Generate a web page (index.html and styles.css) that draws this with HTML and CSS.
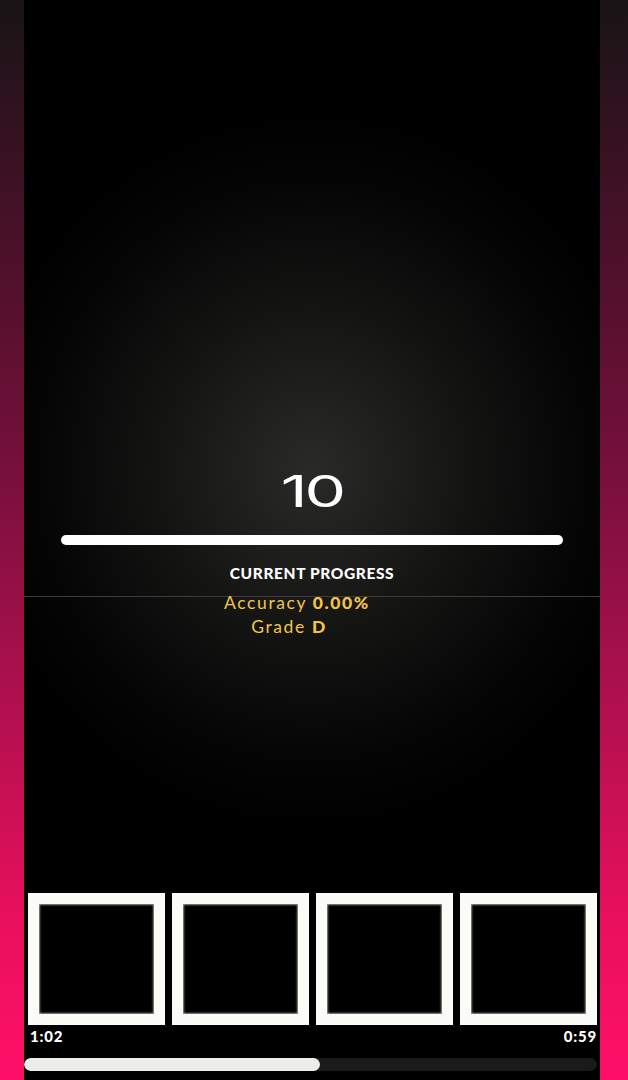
FILE: index.html
```html
<!DOCTYPE html>
<html>
<head>
<meta charset="utf-8">
<link rel="stylesheet" href="styles.css">
</head>
<body>
<div class="page">
  <div class="side side-left"></div>
  <div class="main">
    <div class="stage">
      <div class="count">10</div>
      <div class="bar"></div>
      <div class="label">CURRENT PROGRESS</div>
      <div class="divider"></div>
      <div class="stats">
        <div class="stat">Accuracy <b>0.00%</b></div>
        <div class="stat stat-grade">Grade <b>D</b></div>
      </div>
    </div>
    <div class="bottom">
      <div class="boxes">
        <div class="box"></div>
        <div class="box"></div>
        <div class="box"></div>
        <div class="box"></div>
      </div>
      <div class="times">
        <span>1:02</span>
        <span>0:59</span>
      </div>
      <div class="track"><div class="fill" style="width:51.6%"></div></div>
    </div>
  </div>
  <div class="side side-right"></div>
</div>
</body>
</html>
```
FILE: styles.css
```css
html, body {
  margin: 0;
  padding: 0;
  background: #000;
}
.page {
  display: flex;
  width: 628px;
  height: 1080px;
  overflow: hidden;
  font-family: Lato, "Open Sans", sans-serif;
}
.side {
  background: linear-gradient(to bottom, #181416 0%, #3a1222 15%, #6e1038 40%, #b0104e 65%, #e8105c 85%, #ff1068 100%);
}
.side-left { width: 24px; }
.side-right { width: 28px; }
.main {
  flex: 1;
  display: flex;
  flex-direction: column;
  background: radial-gradient(ellipse 340px 360px at 50% 470px, #2a2a28 0%, #141413 45%, #050505 80%, #000 100%);
}
.stage {
  padding-top: 468px;
  display: flex;
  flex-direction: column;
  align-items: stretch;
}
.count {
  text-align: center;
  color: #fff;
  font-family: Inter, sans-serif;
  font-weight: 400;
  font-size: 44px;
  line-height: 46px;
  height: 46px;
  transform: scaleX(1.5);
  letter-spacing: -2px;
}
.bar {
  margin: 21px 37px 0 37px;
  height: 10px;
  border-radius: 5px;
  background: #fff;
}
.label {
  margin-top: 19px;
  text-align: center;
  color: #fff;
  font-weight: 900;
  font-size: 15.5px;
  line-height: 18px;
  letter-spacing: 0.6px;
}
.divider {
  margin-top: 14px;
  height: 1px;
  background: #3c3c3a;
}
.stats {
  margin-top: -6px;
  padding-right: 30px;
  display: flex;
  flex-direction: column;
  align-items: center;
  color: #f2c54a;
  font-size: 17.5px;
  line-height: 24px;
  letter-spacing: 1.6px;
}
.stat-grade {
  margin-right: 16px;
}
.stat b {
  font-weight: 900;
}
.bottom {
  margin-top: auto;
  padding: 0 3px 9px 4px;
}
.boxes {
  display: flex;
  gap: 7px;
}
.box {
  flex: 1;
  height: 110px;
  border: 11px solid #fbfbf8;
  background: #000;
  box-shadow: inset 0 0 2px 1px #999;
}
.times {
  display: flex;
  justify-content: space-between;
  color: #fff;
  font-weight: 900;
  font-size: 15px;
  line-height: 18px;
  letter-spacing: 0.8px;
  padding: 2px 0 0 2px;
  height: 20px;
}
.track {
  margin: 11px 0 0 -4px;
  height: 13px;
  border-radius: 7px;
  background: #1a1a1a;
  overflow: hidden;
}
.fill {
  height: 100%;
  border-radius: 7px;
  background: #ececea;
}
```
